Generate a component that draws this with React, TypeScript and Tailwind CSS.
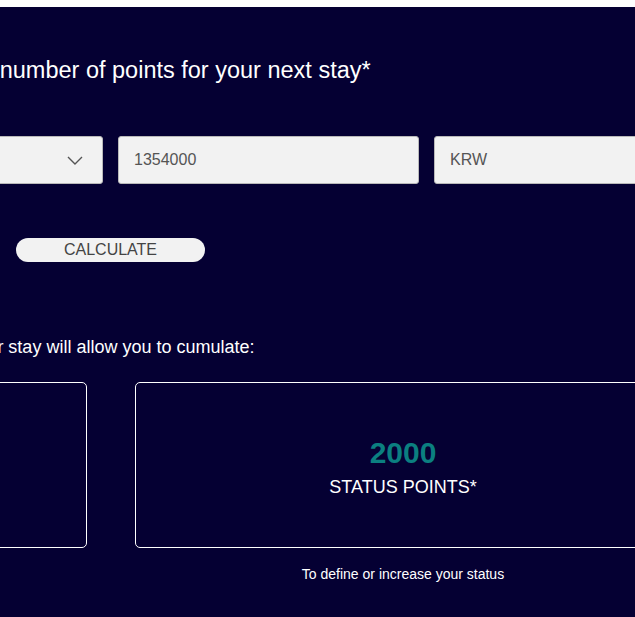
import React from "react";

const font = { fontFamily: '"Liberation Sans", Arial, sans-serif' };

function ChevronDown() {
  return (
    <svg width="16" height="9" viewBox="0 0 16 9" fill="none">
      <path d="M1 1l7 7 7-7" stroke="#555555" strokeWidth="1.4" />
    </svg>
  );
}

function ResultBox({ value, label, caption }: { value?: string; label?: string; caption?: string }) {
  return (
    <div className="w-[536px] shrink-0 flex flex-col">
      <div className="h-[166px] border border-white rounded-[5px] flex flex-col items-center pt-[52px]">
        {value && (
          <span className="text-[30px] leading-[36px] font-bold text-[#0b7f80]">{value}</span>
        )}
        {label && (
          <span className="mt-[4px] text-[18px] leading-[24px] text-white">{label}</span>
        )}
      </div>
      {caption && (
        <p className="mt-[16px] text-[14px] leading-[20px] text-white text-center">{caption}</p>
      )}
    </div>
  );
}

export default function App() {
  return (
    <div className="bg-white pt-[7px] w-[635px]" style={font}>
      <div className="bg-[#050033] h-[610px] overflow-hidden pt-[47px]">
        {/* Titre */}
        <h2 className="ml-[-144px] whitespace-nowrap text-[23.5px] leading-[32px] text-white font-normal">
          Calculate the number of points for your next stay*
        </h2>

        {/* Champs */}
        <div className="mt-[50px] ml-[-198px] flex gap-[15px]">
          <div className="w-[301px] h-[48px] shrink-0 bg-[#f2f2f2] border border-[#b9b9b9] rounded-[3px] flex items-center justify-end pr-[19px]">
            <ChevronDown />
          </div>
          <div className="w-[301px] h-[48px] shrink-0 bg-[#f2f2f2] border border-[#b9b9b9] rounded-[3px] flex items-center pl-[15px] text-[16px] text-[#555555]">
            1354000
          </div>
          <div className="w-[301px] h-[48px] shrink-0 bg-[#f2f2f2] border border-[#b9b9b9] rounded-[3px] flex items-center pl-[15px] text-[16px] text-[#555555]">
            KRW
          </div>
        </div>

        {/* Bouton */}
        <button className="mt-[54px] ml-[16px] w-[189px] h-[24px] rounded-full bg-[#f2f2f2] text-[16px] leading-[24px] text-[#444444] flex items-center justify-center">
          CALCULATE
        </button>

        {/* Résultat */}
        <p className="mt-[73px] ml-[-33px] whitespace-nowrap text-[18px] leading-[24px] text-white">
          Your stay will allow you to cumulate:
        </p>

        <div className="mt-[23px] ml-[-449px] flex gap-[48px]">
          <ResultBox />
          <ResultBox value="2000" label="STATUS POINTS*" caption="To define or increase your status" />
        </div>
      </div>
    </div>
  );
}
